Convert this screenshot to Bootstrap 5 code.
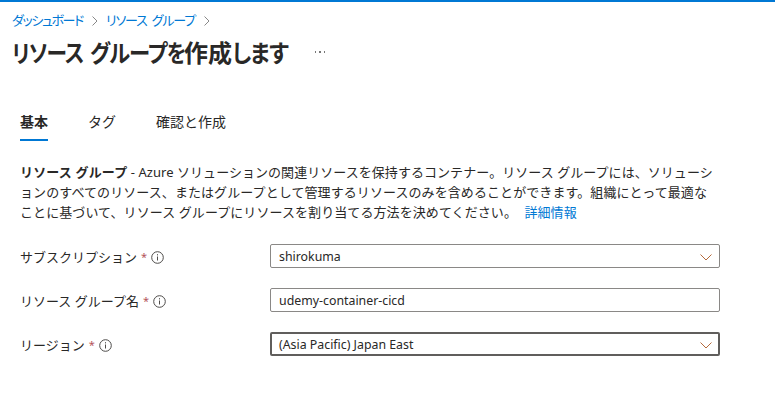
<!DOCTYPE html>
<html lang="ja">
<head>
<meta charset="utf-8">
<title>リソース グループを作成します</title>
<link href="https://cdn.jsdelivr.net/npm/bootstrap@5.3.0/dist/css/bootstrap.min.css" rel="stylesheet">
<style>
body{font:13px/20px "Noto Sans","Noto Sans CJK JP",sans-serif;color:#292827;border-top:2px solid #0078d4;overflow:hidden}
.azure-link,.azure-link:hover{color:#0078d4;text-decoration:none}
.trail{height:20px;margin-top:8px;padding-left:12px}
.trail .azure-link,.page-title{font-family:"Noto Sans CJK JP",sans-serif;font-feature-settings:"palt";white-space:nowrap}
.trail svg{margin-top:1px}
.crumb-a{width:72px;letter-spacing:-1.4px}
.crumb-b{width:90px;letter-spacing:-1.1px;word-spacing:3px}
.title-row{height:40px;padding-left:12px;margin-top:2px}
.page-title{font-size:24px;line-height:36px;font-weight:700;width:303px}
.page-title span{display:block;flex:none;transform-origin:0 50%;letter-spacing:-1px}
.t-resource{width:78px;transform:scaleX(.86)}
.t-group{width:77px;transform:scaleX(.89)}
.t-wo{width:17px;transform:scaleX(.82)}
.page-title .t-create{width:48px;letter-spacing:0}
.t-shimasu{width:56px;transform:scaleX(.91)}
.tab-strip{height:36px;margin:33px 0 0 20px;gap:40px;font-family:"Noto Sans CJK JP",sans-serif;font-size:14px}
.tab-strip .nav-link{padding:5px 0 0;height:36px;color:#292827;line-height:22px}
.tab-strip .nav-link.active{font-weight:700;border-bottom:2px solid #0078d4}
.intro{margin:21px 0 0 20px;white-space:nowrap;letter-spacing:.08px}
.intro-lead{letter-spacing:.15px}
.intro-first{letter-spacing:.05px}
.azure-form{margin:22px 0 0 20px;width:700px;gap:20px}
.azure-form .form-row{height:24px}
.field-label{width:250px;white-space:nowrap;padding-top:2px}
.req{color:#b4545a;font-size:11px;margin:0 4px 0 4px}
.azure-form .form-control{height:24px;min-height:24px;padding:1px 7px 0 8px;border:1px solid #8a8886;border-radius:2px;font-size:12.35px;line-height:22px;color:#292827;box-shadow:none}
.azure-form .form-control.focused{border:2px solid #605e5c;padding:1px 6px 0 7px;line-height:20px}
.form-control svg{margin-top:1px}
.field-label svg{margin-top:1px}
svg{flex:none;fill:none}
</style>
<script src="https://cdn.jsdelivr.net/npm/bootstrap@5.3.0/dist/js/bootstrap.bundle.min.js"></script>
</head>
<body class="bg-white">
<nav class="trail d-flex align-items-center">
<a class="azure-link crumb-a" href="#">ダッシュボード</a>
<svg class="ms-2" width="6" height="10" viewBox="0 0 6 10" stroke="#888"><path d="M.5.5 5 5 .5 9.5"/></svg>
<a class="azure-link crumb-b ms-2" href="#">リソース グループ</a>
<svg class="ms-2" width="6" height="10" viewBox="0 0 6 10" stroke="#888"><path d="M.5.5 5 5 .5 9.5"/></svg>
</nav>
<div class="title-row d-flex align-items-center">
<h1 class="page-title d-flex mb-0"><span class="t-resource">リソース</span> <span class="t-group">グループ</span><span class="t-wo">を</span><span class="t-create">作成</span><span class="t-shimasu">します</span></h1>
<svg width="12" height="2" viewBox="0 0 12 2"><path fill="#777" d="M0 0h1v2H0zM4 0h2v2H4zM9 0h1v2H9z"/></svg>
</div>
<ul class="nav tab-strip">
<li class="nav-item"><a class="nav-link active" href="#">基本</a></li>
<li class="nav-item"><a class="nav-link" href="#">タグ</a></li>
<li class="nav-item"><a class="nav-link" href="#">確認と作成</a></li>
</ul>
<div class="intro">
<div class="intro-first"><b class="intro-lead">リソース グループ</b> - Azure ソリューションの関連リソースを保持するコンテナー。リソース グループには、ソリューシ</div>
<div>ョンのすべてのリソース、またはグループとして管理するリソースのみを含めることができます。組織にとって最適な</div>
<div>ことに基づいて、リソース グループにリソースを割り当てる方法を決めてください。 <a class="azure-link ms-1" href="#">詳細情報</a></div>
</div>
<form class="azure-form d-flex flex-column">
<div class="form-row d-flex align-items-center"><div class="field-label d-flex align-items-center flex-shrink-0"><span>サブスクリプション</span><span class="req">*</span><svg width="13" height="13" viewBox="0 0 13 13" stroke="#4d4b49"><circle cx="6.5" cy="6.5" r="5.8"/><path d="M6.5 5.5v4M6.5 3.2v1.2"/></svg></div>
<div class="form-control d-flex justify-content-between align-items-center"><span>shirokuma</span><svg width="12" height="7" viewBox="0 0 12 7" stroke="#b46a3c"><path d="M.5.5 6 6 11.5.5"/></svg></div></div>
<div class="form-row d-flex align-items-center"><div class="field-label d-flex align-items-center flex-shrink-0"><span>リソース グループ名</span><span class="req">*</span><svg width="13" height="13" viewBox="0 0 13 13" stroke="#4d4b49"><circle cx="6.5" cy="6.5" r="5.8"/><path d="M6.5 5.5v4M6.5 3.2v1.2"/></svg></div>
<input class="form-control" value="udemy-container-cicd"></div>
<div class="form-row d-flex align-items-center"><div class="field-label d-flex align-items-center flex-shrink-0"><span>リージョン</span><span class="req">*</span><svg width="13" height="13" viewBox="0 0 13 13" stroke="#4d4b49"><circle cx="6.5" cy="6.5" r="5.8"/><path d="M6.5 5.5v4M6.5 3.2v1.2"/></svg></div>
<div class="form-control focused d-flex justify-content-between align-items-center"><span>(Asia Pacific) Japan East</span><svg width="12" height="7" viewBox="0 0 12 7" stroke="#b46a3c"><path d="M.5.5 6 6 11.5.5"/></svg></div></div>
</form>
</body>
</html>
